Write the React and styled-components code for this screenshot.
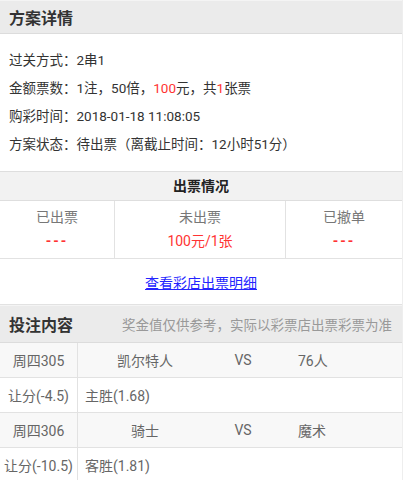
import styled, { createGlobalStyle } from 'styled-components';

const GlobalStyle = createGlobalStyle`
    body {
        margin: 0;
        background: #fff;
        font-family: Roboto, "Noto Sans CJK SC", sans-serif;
        color: #333;
    }
`;

const Page = styled.div`
    width: 403px;
    border-right: 1px solid #eee;
    box-sizing: border-box;
`;

const SectionHeader = styled.div`
    display: flex;
    align-items: center;
    justify-content: space-between;
    height: ${p => p.h}px;
    padding: 0 10px 0 9px;
    background: #ebebeb;
    border-top: 1px solid #f4f4f4;
    border-bottom: 1px solid #dcdcdc;
    box-sizing: border-box;
`;

const Title = styled.div`
    font-size: 16px;
    font-weight: bold;
    color: #333;
`;

const Note = styled.div`
    font-size: 13.5px;
    color: #999;
`;

const Info = styled.div`
    padding: 12px 9px 13px;
    border-bottom: 1px solid #dedede;
`;

const InfoLine = styled.div`
    font-size: 13.5px;
    line-height: 28px;
    color: #333;
`;

const Red = styled.span`
    color: #ff3333;
`;

const TicketTitle = styled.div`
    height: 28px;
    line-height: 28px;
    text-align: center;
    font-size: 14px;
    font-weight: bold;
    color: #222;
    background: #f2f2f2;
    border-bottom: 1px solid #dedede;
`;

const TicketGrid = styled.div`
    display: grid;
    grid-template-columns: 114px 171px 1fr;
    border-bottom: 1px solid #e2e2e2;
`;

const TicketCell = styled.div`
    padding: 4px 0 5px;
    text-align: center;
    font-size: 14px;
    line-height: 24px;
    border-left: ${p => (p.first ? 'none' : '1px solid #e2e2e2')};
`;

const Label = styled.div`
    color: #777;
`;

const Value = styled.div`
    color: #ff3333;
    letter-spacing: ${p => (p.dash ? '2px' : 'normal')};
    font-weight: ${p => (p.dash ? 'bold' : 'normal')};
`;

const LinkRow = styled.div`
    height: 45px;
    display: flex;
    align-items: center;
    justify-content: center;
    border-bottom: 1px solid #e2e2e2;
`;

const DetailLink = styled.a`
    font-size: 14px;
    color: #2424ff;
    text-decoration: underline;
`;

const Row = styled.div`
    display: grid;
    grid-template-columns: 78px 134px 62px 1fr;
    height: 35px;
    align-items: center;
    font-size: 14px;
    color: #666;
    background: ${p => (p.shade ? '#f8f8f8' : '#fff')};
    border-bottom: 1px solid #e2e2e2;
    box-sizing: border-box;
`;

const LeadCell = styled.div`
    height: 100%;
    display: flex;
    align-items: center;
    justify-content: center;
    border-right: 1px solid #e2e2e2;
    white-space: nowrap;
`;

const Cell = styled.div`
    text-align: ${p => p.align || 'center'};
    padding-left: ${p => p.pad || 0}px;
`;

const BetCell = styled.div`
    grid-column: 2 / 5;
    padding-left: 7px;
`;

const matches = [
    { no: '周四305', home: '凯尔特人', away: '76人', play: '让分(-4.5)', pick: '主胜(1.68)' },
    { no: '周四306', home: '骑士', away: '魔术', play: '让分(-10.5)', pick: '客胜(1.81)' },
];

const App = () => (
    <Page>
        <GlobalStyle />
        <SectionHeader h={34}>
            <Title>方案详情</Title>
        </SectionHeader>
        <Info>
            <InfoLine>过关方式：2串1</InfoLine>
            <InfoLine>
                金额票数：1注，50倍，<Red>100</Red>元，共<Red>1</Red>张票
            </InfoLine>
            <InfoLine>购彩时间：2018-01-18 11:08:05</InfoLine>
            <InfoLine>方案状态：待出票（离截止时间：12小时51分）</InfoLine>
        </Info>
        <TicketTitle>出票情况</TicketTitle>
        <TicketGrid>
            <TicketCell first>
                <Label>已出票</Label>
                <Value dash>---</Value>
            </TicketCell>
            <TicketCell>
                <Label>未出票</Label>
                <Value>100元/1张</Value>
            </TicketCell>
            <TicketCell>
                <Label>已撤单</Label>
                <Value dash>---</Value>
            </TicketCell>
        </TicketGrid>
        <LinkRow>
            <DetailLink href="#">查看彩店出票明细</DetailLink>
        </LinkRow>
        <SectionHeader h={38}>
            <Title>投注内容</Title>
            <Note>奖金值仅供参考，实际以彩票店出票彩票为准</Note>
        </SectionHeader>
        {matches.map(m => (
            <div key={m.no}>
                <Row shade>
                    <LeadCell>{m.no}</LeadCell>
                    <Cell>{m.home}</Cell>
                    <Cell>VS</Cell>
                    <Cell align="left" pad={24}>{m.away}</Cell>
                </Row>
                <Row>
                    <LeadCell>{m.play}</LeadCell>
                    <BetCell>{m.pick}</BetCell>
                </Row>
            </div>
        ))}
    </Page>
);

export default App;
